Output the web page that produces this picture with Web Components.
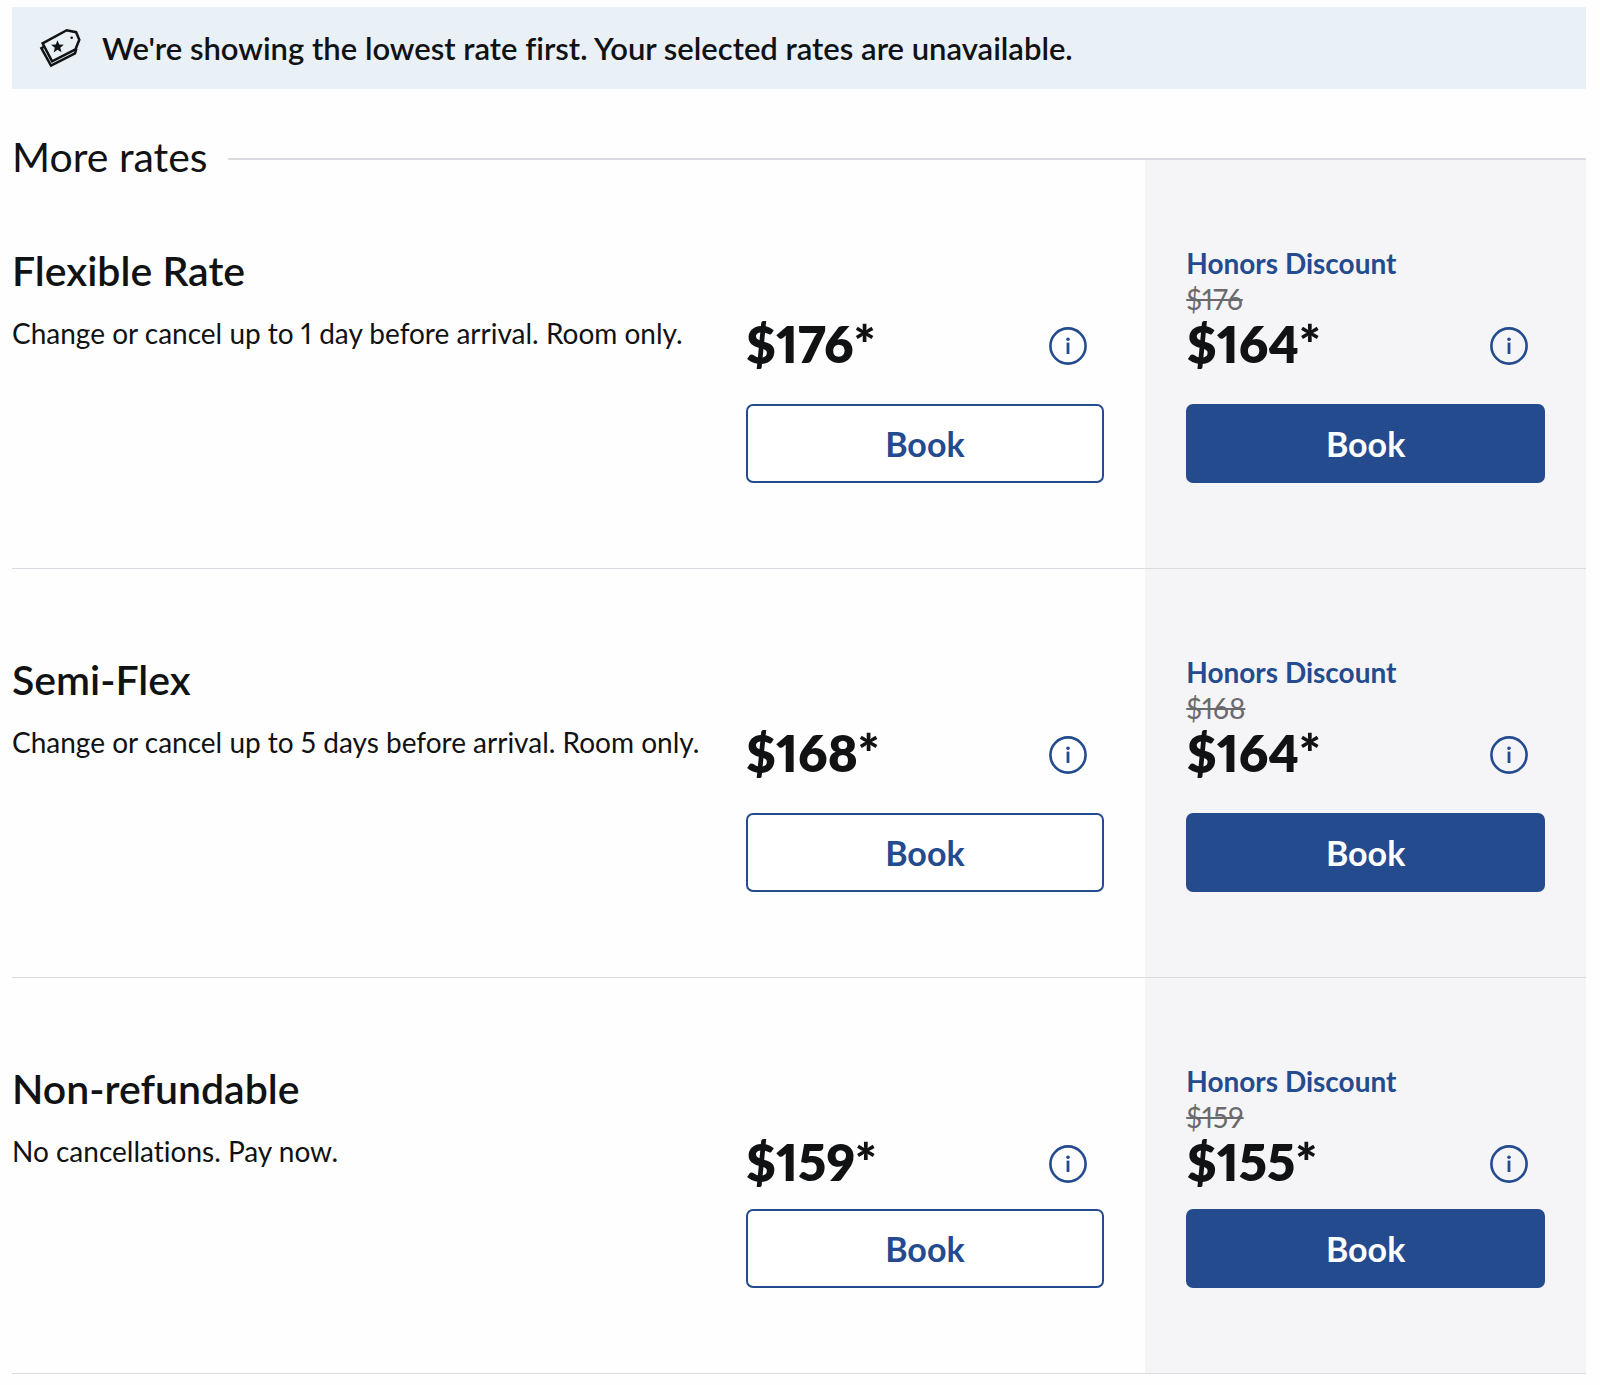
<!DOCTYPE html>
<html lang="en">
<head>
<meta charset="utf-8">
<meta name="viewport" content="width=device-width, initial-scale=1">
<title>Room rates</title>
<style>
  :root {
    --ink: #101214;
    --muted: #6a6a6c;
    --blue: #234b8e;
    --line: #d9dbe0;
    --shade: #f5f5f8;
    --banner: #e9f0f6;
    --columns: 11fr 7fr 7fr;
  }
  body {
    margin: 0;
    padding: 7px 14px 10px 12px;
    background: #fefefe;
    color: var(--ink);
    font-family: Lato, "Open Sans", sans-serif;
    font-variant-ligatures: none;
    font-variant-numeric: proportional-nums;
  }
</style>
</head>
<body>
<rate-banner>We're showing the lowest rate first. Your selected rates are unavailable.</rate-banner>
<rate-list heading="More rates">
  <rate-row name="Flexible Rate" price="$176" honors="$164">Change or cancel up to 1 day before arrival. Room only.</rate-row>
  <rate-row name="Semi-Flex" price="$168" honors="$164">Change or cancel up to 5 days before arrival. Room only.</rate-row>
  <rate-row name="Non-refundable" price="$159" honors="$155" compact>No cancellations. Pay now.</rate-row>
</rate-list>

<script>
class RateBanner extends HTMLElement {
  constructor() {
    super();
    this.attachShadow({ mode: "open" }).innerHTML = `
      <style>
        :host { display: flex; align-items: center; gap: 20px; box-sizing: border-box;
          min-height: 82px; padding: 0 26px; background: var(--banner); }
        svg { flex: none; display: block; }
        p { margin: 0; font-size: 31px; line-height: 40px; font-weight: 600; }
      </style>
      <svg width="44" height="44" viewBox="0 0 44 44" fill="none" stroke="#101214" stroke-width="2.5" aria-hidden="true">
        <path d="M4.6 17.3 28.7 4.2l9.4 2 3.2 7.5-3.8 9.6-23.4 12Z"/>
        <path d="M6.6 20.4 3.4 22.3 13 39.7 37 27.3l1.4-4.6"/>
        <circle cx="33.7" cy="11.7" r="1.3" fill="#101214" stroke="none"/>
        <path d="m19.5 14.2 1.7 4.3 4.6.2-3.5 3 1.2 4.6-4-2.5-3.8 2.7 1.1-4.7-3.7-3 4.7-.3Z" fill="#101214" stroke="none"/>
      </svg>
      <p><slot></slot></p>`;
  }
}

class RateList extends HTMLElement {
  connectedCallback() {
    this.attachShadow({ mode: "open" }).innerHTML = `
      <style>
        :host { display: block; padding-top: 46px; }
        header { display: flex; align-items: center; gap: 20px; height: 48px; margin-bottom: -23px; }
        h2 { margin: 0; padding-bottom: 4px; font-size: 41px; line-height: 44px; font-weight: 400; }
        header::after { content: ""; flex: 1; height: 2px; background: var(--line); }
      </style>
      <header><h2></h2></header>
      <slot></slot>`;
    this.shadowRoot.querySelector("h2").textContent = this.getAttribute("heading");
  }
}

class InfoButton extends HTMLElement {
  constructor() {
    super();
    this.attachShadow({ mode: "open" }).innerHTML = `
      <style>
        :host { display: block; padding-top: 4px; }
        button { display: block; padding: 0; border: 0; background: none; color: var(--blue); cursor: pointer; }
        svg { display: block; }
      </style>
      <button type="button" aria-label="Rate details">
        <svg width="38" height="38" viewBox="0 0 38 38" fill="none" aria-hidden="true">
          <circle cx="19" cy="19" r="17.6" stroke="currentColor" stroke-width="2.6"/>
          <circle cx="19" cy="12.2" r="1.8" fill="currentColor"/>
          <path d="M19 15.6v11.4" stroke="currentColor" stroke-width="2.8"/>
        </svg>
      </button>`;
  }
}

class BookButton extends HTMLElement {
  constructor() {
    super();
    this.attachShadow({ mode: "open" }).innerHTML = `
      <style>
        :host { display: block; }
        button { display: block; width: 100%; height: 79px; padding: 0; cursor: pointer;
          border: 2px solid var(--blue); border-radius: 7px; background: #fff; color: var(--blue);
          font: 700 34px/40px Lato, "Open Sans", sans-serif; }
        :host([primary]) button { background: var(--blue); color: #fff; }
      </style>
      <button type="button"><slot></slot></button>`;
  }
}

class RateRow extends HTMLElement {
  connectedCallback() {
    this.attachShadow({ mode: "open" }).innerHTML = `
      <style>
        :host { display: grid; grid-template-columns: var(--columns); border-bottom: 1px solid var(--line); --gap: 33px; }
        :host([compact]) { --gap: 20px; }
        section { padding: 85px 0; }
        h3 { margin: 0 0 18px; font-size: 41px; line-height: 52px; font-weight: 600; }
        p { margin: 0; font-size: 28px; line-height: 36px; }
        .offer { display: flex; flex-direction: column; justify-content: flex-end; padding-left: 41px; padding-right: 41px; }
        .honors { background: var(--shade); }
        .label { color: var(--blue); font-weight: 700; }
        s { align-self: flex-start; font-size: 28px; line-height: 36px; color: var(--muted); }
        .amount { display: flex; align-items: center; justify-content: space-between; padding-right: 17px; margin-bottom: var(--gap); }
        strong { font-size: 51px; line-height: 54px; font-weight: 800; }
      </style>
      <section>
        <h3></h3>
        <p><slot></slot></p>
      </section>
      <section class="offer">
        <div class="amount"><strong id="price"></strong><info-button></info-button></div>
        <book-button>Book</book-button>
      </section>
      <section class="offer honors">
        <p class="label">Honors Discount</p>
        <s></s>
        <div class="amount"><strong id="member"></strong><info-button></info-button></div>
        <book-button primary>Book</book-button>
      </section>`;
    const put = (selector, text) => { this.shadowRoot.querySelector(selector).textContent = text; };
    put("h3", this.getAttribute("name"));
    put("#price", this.getAttribute("price") + "*");
    put("s", this.getAttribute("price"));
    put("#member", this.getAttribute("honors") + "*");
  }
}

customElements.define("rate-banner", RateBanner);
customElements.define("info-button", InfoButton);
customElements.define("book-button", BookButton);
customElements.define("rate-row", RateRow);
customElements.define("rate-list", RateList);
</script>
</body>
</html>
